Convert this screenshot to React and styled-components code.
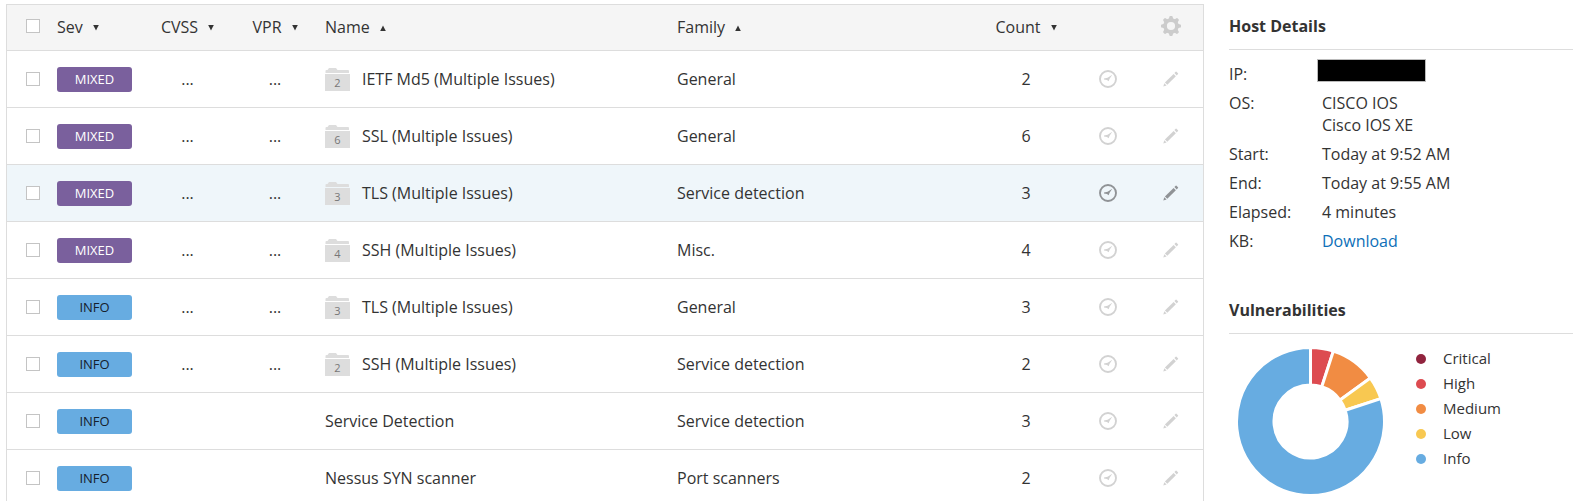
import React from "react"
import styled, { createGlobalStyle, css } from "styled-components"

const GlobalStyle = createGlobalStyle`
  *,
  *::before,
  *::after {
    box-sizing: border-box;
  }

  body {
    margin: 0;
    overflow: hidden;
    background: #fff;
    color: #333;
    font-family: "Open Sans", "Noto Sans", sans-serif;
    font-size: 16px;
    line-height: 22px;
  }
`

const Page = styled.div`
  display: flex;
  align-items: flex-start;
  gap: 25px;
  height: 100vh;
  padding: 4px 0 0 6px;
`

const Main = styled.main`
  flex: 1;
  min-width: 0;
`

const Table = styled.table`
  width: 100%;
  table-layout: fixed;
  border-collapse: separate;
  border-spacing: 0;
  border: 1px solid #ddd;
`

const Col = styled.col`
  width: ${({ $width }) => ($width ? `${$width}px` : "auto")};
`

const cell = css`
  padding: 0 0 0 ${({ $inset }) => ($inset ? "6px" : "0")};
  border-bottom: 1px solid #ddd;
  text-align: ${({ $center }) => ($center ? "center" : "left")};
  vertical-align: middle;
  font-weight: 400;
  white-space: nowrap;
`

const Th = styled.th`
  ${cell}
  height: 46px;
  padding-bottom: 3px;
  background: #f5f5f5;
`

const Td = styled.td`
  ${cell}
  height: 57px;
`

const Row = styled.tr`
  background: ${({ $active }) => ($active ? "#eff6fa" : "#fff")};
  color: #333;
`

const Checkbox = styled.input.attrs({ type: "checkbox" })`
  appearance: none;
  display: block;
  width: 14px;
  height: 14px;
  margin: 0 0 0 19px;
  border: 1px solid #c4c4c4;
  background: #fff;

  &:checked {
    background: #67ace1;
  }
`

const SortButton = styled.button`
  display: inline-flex;
  align-items: center;
  gap: 10px;
  padding: 0;
  border: 0;
  background: none;
  color: inherit;
  font: inherit;
  vertical-align: middle;
  cursor: pointer;
`

const SortIcon = styled.svg`
  width: 6px;
  height: 6px;
  margin-top: 3px;
  fill: #333;
`

const IconButton = styled.button`
  display: flex;
  margin: 0 auto;
  padding: 0;
  border: 0;
  background: none;
  color: ${({ $active }) => ($active ? "#909396" : "#d2d2d2")};
  cursor: pointer;
`

const Badge = styled.span`
  display: block;
  width: 75px;
  border-radius: 3px;
  background: ${({ $level }) => ($level === "MIXED" ? "#7a609d" : "#67ace1")};
  color: ${({ $level }) => ($level === "MIXED" ? "#fff" : "#15202b")};
  font-size: 13px;
  line-height: 25px;
  text-align: center;
`

const NameCell = styled.div`
  display: flex;
  align-items: center;
  gap: 12px;
`

const Folder = styled.span`
  display: flex;
  flex-direction: column;
  width: 25px;
  color: #ddd;
`

const FolderCount = styled.span`
  height: 17px;
  margin-top: 1px;
  background: #ddd;
  color: #777;
  font-size: 11px;
  line-height: 17px;
  text-align: center;
`

const Sidebar = styled.aside`
  width: 344px;
`

const Heading = styled.h2`
  margin: 0;
  padding: 12px 0;
  border-bottom: 1px solid #ddd;
  font-size: 16px;
  font-weight: 700;
  line-height: 21px;
`

const Details = styled.dl`
  display: grid;
  grid-template-columns: 93px 1fr;
  row-gap: 7px;
  margin: 0;
  padding: 13px 0 36px;
`

const Term = styled.dt`
  margin: 0;
`

const Value = styled.dd`
  margin: 0;
`

const Redacted = styled.span`
  display: block;
  width: 109px;
  height: 23px;
  margin: -4px 0 0 -5px;
  border: 1px solid #bbb;
  background: #000;
`

const Download = styled.a`
  color: #0d6fb8;
  text-decoration: none;
`

const ChartArea = styled.div`
  display: flex;
  align-items: flex-start;
  gap: 32px;
  padding: 12px 0 0 8px;
`

const Chart = styled.svg`
  width: 147px;
  height: 147px;
  margin-top: 2px;
`

const Legend = styled.ul`
  margin: 0;
  padding: 0;
  list-style: none;
`

const LegendItem = styled.li`
  display: flex;
  align-items: center;
  gap: 17px;
  font-size: 15px;
  line-height: 25px;

  &::before {
    content: "";
    width: 10px;
    height: 10px;
    border-radius: 50%;
    background: ${({ $color }) => $color};
  }
`

const issues = [
  { sev: "MIXED", group: 2, name: "IETF Md5 (Multiple Issues)", family: "General", count: 2 },
  { sev: "MIXED", group: 6, name: "SSL (Multiple Issues)", family: "General", count: 6 },
  { sev: "MIXED", group: 3, name: "TLS (Multiple Issues)", family: "Service detection", count: 3, active: true },
  { sev: "MIXED", group: 4, name: "SSH (Multiple Issues)", family: "Misc.", count: 4 },
  { sev: "INFO", group: 3, name: "TLS (Multiple Issues)", family: "General", count: 3 },
  { sev: "INFO", group: 2, name: "SSH (Multiple Issues)", family: "Service detection", count: 2 },
  { sev: "INFO", name: "Service Detection", family: "Service detection", count: 3 },
  { sev: "INFO", name: "Nessus SYN scanner", family: "Port scanners", count: 2 },
]

const severities = [
  { label: "Critical", color: "#91243e", share: 0 },
  { label: "High", color: "#dd4b50", share: 5 },
  { label: "Medium", color: "#f18c43", share: 10 },
  { label: "Low", color: "#f8c851", share: 5 },
  { label: "Info", color: "#67ace1", share: 80 },
]

function Sort({ label, up }) {
  return (
    <SortButton type="button">
      {label}
      <SortIcon viewBox="0 0 6 6" aria-hidden="true">
        <path d={up ? "M3 0.5 5.8 6H0.2z" : "M0.2 0H5.8L3 5.5z"} />
      </SortIcon>
    </SortButton>
  )
}

function GearIcon() {
  return (
    <svg width="20" height="20" viewBox="-10 -10 20 20" aria-hidden="true">
      {[0, 45, 90, 135, 180, 225, 270, 315].map(angle => (
        <path key={angle} d="M-1.6-9.3Q-1.5-10-0.9-10H0.9Q1.5-10 1.6-9.3L2.6-6H-2.6z" fill="#ccc" transform={`rotate(${angle})`} />
      ))}
      <circle r="5.9" fill="none" stroke="#ccc" strokeWidth="3.6" />
    </svg>
  )
}

function GaugeIcon() {
  return (
    <svg width="18" height="18" viewBox="0 0 18 18" aria-hidden="true">
      <circle cx="9" cy="9" r="8" fill="none" stroke="currentColor" strokeWidth="1.9" />
      <path d="M5 8.4 8.6 7.8 13.3 4.8 10.6 8.8 9.6 11.2 8 10 5 9.6z" fill="currentColor" />
    </svg>
  )
}

function PencilIcon() {
  return (
    <svg width="16" height="16" viewBox="0 0 16 16" fill="currentColor" aria-hidden="true">
      <path d="M0.3 15.5 1.3 12.2 3.6 14.5z" />
      <path d="M1.9 11.4 10.6 2.9 12.9 5.2 4.3 13.8z" />
      <path d="M11.4 2.1 12.7 0.8Q13.1 0.4 13.5 0.8L15 2.3Q15.4 2.7 15 3.1L13.7 4.4z" />
    </svg>
  )
}

function FolderIcon({ count }) {
  return (
    <Folder>
      <svg width="25" height="5" viewBox="0 0 25 5" fill="currentColor" aria-hidden="true">
        <path d="M0.5 5V3Q0.5 2 1.5 2H2.5L4 0H11L12.5 2H23Q24 2 24 3V5z" />
      </svg>
      <FolderCount>{count}</FolderCount>
    </Folder>
  )
}

const point = (percent, radius) => {
  const angle = (percent / 100) * Math.PI * 2
  return `${Math.sin(angle) * radius} ${-Math.cos(angle) * radius}`
}

function Donut() {
  let start = 0
  return (
    <Chart viewBox="-73.5 -73.5 147 147" role="img" aria-label="Vulnerabilities by severity">
      {severities.map(({ label, color, share }) => {
        if (!share) return null
        const end = start + share
        const large = share > 50 ? 1 : 0
        const d = `M${point(start, 74)}A74 74 0 ${large} 1 ${point(end, 74)}L${point(end, 36.5)}A36.5 36.5 0 ${large} 0 ${point(start, 36.5)}z`
        start = end
        return <path key={label} d={d} fill={color} stroke="#fff" strokeWidth="3" />
      })}
    </Chart>
  )
}

function IssueRow({ issue }) {
  const { sev, group, name, family, count, active } = issue
  return (
    <Row $active={active}>
      <Td>
        <Checkbox aria-label={`Select ${name}`} />
      </Td>
      <Td>
        <Badge $level={sev}>{sev}</Badge>
      </Td>
      <Td $center>{group && "..."}</Td>
      <Td $center>{group && "..."}</Td>
      <Td $inset>
        <NameCell>
          {group && <FolderIcon count={group} />}
          {name}
        </NameCell>
      </Td>
      <Td $inset>{family}</Td>
      <Td $center>{count}</Td>
      <Td $center>
        <IconButton type="button" aria-label="Snooze" $active={active}>
          <GaugeIcon />
        </IconButton>
      </Td>
      <Td $center>
        <IconButton type="button" aria-label="Modify" $active={active}>
          <PencilIcon />
        </IconButton>
      </Td>
    </Row>
  )
}

export default function App() {
  return (
    <>
      <GlobalStyle />
      <Page>
        <Main>
          <Table>
            <colgroup>
              {[50, 87, 87, 88, null, 304, 102, 62, 64].map((width, i) => (
                <Col key={i} $width={width} />
              ))}
            </colgroup>
            <thead>
              <tr>
                <Th>
                  <Checkbox aria-label="Select all" />
                </Th>
                <Th><Sort label="Sev" /></Th>
                <Th $center><Sort label="CVSS" /></Th>
                <Th $center><Sort label="VPR" /></Th>
                <Th $inset><Sort label="Name" up /></Th>
                <Th $inset><Sort label="Family" up /></Th>
                <Th $center><Sort label="Count" /></Th>
                <Th />
                <Th $center>
                  <IconButton type="button" aria-label="Settings">
                    <GearIcon />
                  </IconButton>
                </Th>
              </tr>
            </thead>
            <tbody>
              {issues.map((issue, i) => (
                <IssueRow key={i} issue={issue} />
              ))}
            </tbody>
          </Table>
        </Main>
        <Sidebar>
          <Heading>Host Details</Heading>
          <Details>
            <Term>IP:</Term>
            <Value><Redacted /></Value>
            <Term>OS:</Term>
            <Value>CISCO IOS<br />Cisco IOS XE</Value>
            <Term>Start:</Term>
            <Value>Today at 9:52 AM</Value>
            <Term>End:</Term>
            <Value>Today at 9:55 AM</Value>
            <Term>Elapsed:</Term>
            <Value>4 minutes</Value>
            <Term>KB:</Term>
            <Value><Download href="#kb">Download</Download></Value>
          </Details>
          <Heading>Vulnerabilities</Heading>
          <ChartArea>
            <Donut />
            <Legend>
              {severities.map(({ label, color }) => (
                <LegendItem key={label} $color={color}>{label}</LegendItem>
              ))}
            </Legend>
          </ChartArea>
        </Sidebar>
      </Page>
    </>
  )
}
